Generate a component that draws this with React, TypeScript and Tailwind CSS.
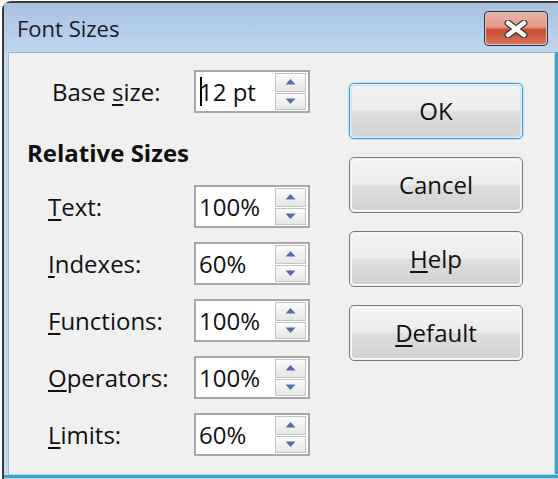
import React from "react";

const font = { fontFamily: '"Open Sans", "Noto Sans", sans-serif' };

function Arrow({ up }: { up: boolean }) {
  return (
    <svg width="11" height="6" viewBox="0 0 11 6">
      {up ? (
        <polygon points="5.5,0 10.5,5.5 0.5,5.5" fill="#5a6aae" />
      ) : (
        <polygon points="0.5,0.5 10.5,0.5 5.5,6" fill="#5a6aae" />
      )}
    </svg>
  );
}

function Spin({ value, caret }: { value: string; caret?: boolean }) {
  return (
    <div className="w-[116px] h-[43px] border-2 border-[#a8a8a8] bg-white flex flex-row">
      <div className="flex-1 flex items-center pl-[3px] relative text-[24px] leading-[32px] text-[#111]">
        {caret && (
          <span className="absolute left-[4px] top-[5px] w-[2px] h-[29px] bg-black" />
        )}
        <span>{value}</span>
      </div>
      <div className="w-[31px] mr-[2px] py-[1px] flex flex-col gap-[1px]">
        <div className="flex-[19] border border-[#c3c3c3] bg-gradient-to-b from-[#fbfbfb] to-[#e6e6e6] flex items-center justify-center">
          <Arrow up />
        </div>
        <div className="flex-[17] border border-[#c3c3c3] bg-gradient-to-b from-[#fbfbfb] to-[#e6e6e6] flex items-center justify-center">
          <Arrow up={false} />
        </div>
      </div>
    </div>
  );
}

function Row({ label, u, rest, value, pl, mt, caret }: { label?: string; u: string; rest: string; value: string; pl: string; mt: string; caret?: boolean }) {
  return (
    <div className={`flex flex-row items-center ${mt}`}>
      <div className={`flex-1 ${pl} text-[24px] leading-[32px] text-[#111] pt-[1px]`}>
        {label}
        <span className="underline underline-offset-[3px] decoration-[1.5px]">{u}</span>
        {rest}
      </div>
      <Spin value={value} caret={caret} />
    </div>
  );
}

function Btn({ children, def }: { children: React.ReactNode; def?: boolean }) {
  return (
    <div
      className={`w-[174px] h-[56px] rounded-[5px] border ${
        def ? "border-[#2f9bd6] shadow-[0_0_2px_#6fc3ee]" : "border-[#7a7a7a]"
      } p-[1px]`}
    >
      <div
        className={`w-full h-full rounded-[4px] border ${
          def ? "border-[#bfe6f8]" : "border-[#fbfbfb]"
        } bg-[linear-gradient(to_bottom,#f3f3f3_0%,#ececec_48%,#dedede_52%,#d2d2d2_100%)] flex items-center justify-center text-[24px] leading-[32px] text-[#111]`}
      >
        {children}
      </div>
    </div>
  );
}

export default function App() {
  return (
    <div className="w-[558px] h-[479px] bg-white overflow-hidden" style={font}>
      <div className="ml-[2px] mt-[1px] w-[560px] h-[480px] rounded-tl-[9px] border-l-2 border-t-2 border-[#3b3b3b] bg-[#bcd3ec] flex flex-col">
        {/* title bar */}
        <div className="h-[49px] flex flex-row items-start bg-gradient-to-b from-[#a9c3df] to-[#bdd4ed]">
          <div className="pl-[13px] pt-[10px] text-[22px] leading-[30px] text-[#1a1a2a]">Font Sizes</div>
          <div className="flex-1" />
          <div className="mt-[8px] mr-[14px] w-[64px] h-[35px] rounded-[4px] border border-[#4a2a24] p-[1px] shadow-[0_0_1px_#fff]">
            <div className="w-full h-full rounded-[3px] bg-[linear-gradient(to_bottom,#eeb2a5_0%,#e29a89_45%,#c94a33_55%,#d8735a_100%)] flex items-center justify-center">
              <svg width="24" height="18" viewBox="0 0 24 18">
                <path d="M4 3 L20 15 M20 3 L4 15" stroke="#3a3a3a" strokeWidth="7" strokeLinecap="round" />
                <path d="M4 3 L20 15 M20 3 L4 15" stroke="#ffffff" strokeWidth="4.5" strokeLinecap="round" />
              </svg>
            </div>
          </div>
        </div>
        {/* body */}
        <div className="flex flex-row h-[422px]">
          <div className="w-[4px] bg-[#c2d8ef]" />
          <div className="w-[546px] h-[422px] bg-[#f0f0f0] border-t border-l border-[#9fb4cc] flex flex-row">
            <div className="w-[301px] flex flex-col pt-[17px]">
              <Row label="Base " u="s" rest="ize:" value="12 pt" caret pl="pl-[43px]" mt="" />
              <div className="mt-[24px] h-[32px] pl-[18px] text-[24px] leading-[32px] font-bold text-[#111]">Relative Sizes</div>
              <Row u="T" rest="ext:" value="100%" pl="pl-[39px]" mt="mt-[16px]" />
              <Row u="I" rest="ndexes:" value="60%" pl="pl-[39px]" mt="mt-[14px]" />
              <Row u="F" rest="unctions:" value="100%" pl="pl-[39px]" mt="mt-[14px]" />
              <Row u="O" rest="perators:" value="100%" pl="pl-[39px]" mt="mt-[14px]" />
              <Row u="L" rest="imits:" value="60%" pl="pl-[39px]" mt="mt-[14px]" />
            </div>
            <div className="ml-[39px] pt-[30px] flex flex-col gap-[18px]">
              <Btn def>OK</Btn>
              <Btn>Cancel</Btn>
              <Btn>
                <span className="underline underline-offset-[3px] decoration-[1.5px]">H</span>elp
              </Btn>
              <Btn>
                <span className="underline underline-offset-[3px] decoration-[1.5px]">D</span>efault
              </Btn>
            </div>
          </div>
          <div className="w-[1px] bg-[#a6dcec]" />
          <div className="w-[3px] bg-[#3aa3cc]" />
        </div>
        <div className="h-[1px] bg-[#a6dcec] ml-[4px]" />
        <div className="h-[3px] bg-[#3aa3cc]" />
      </div>
    </div>
  );
}
